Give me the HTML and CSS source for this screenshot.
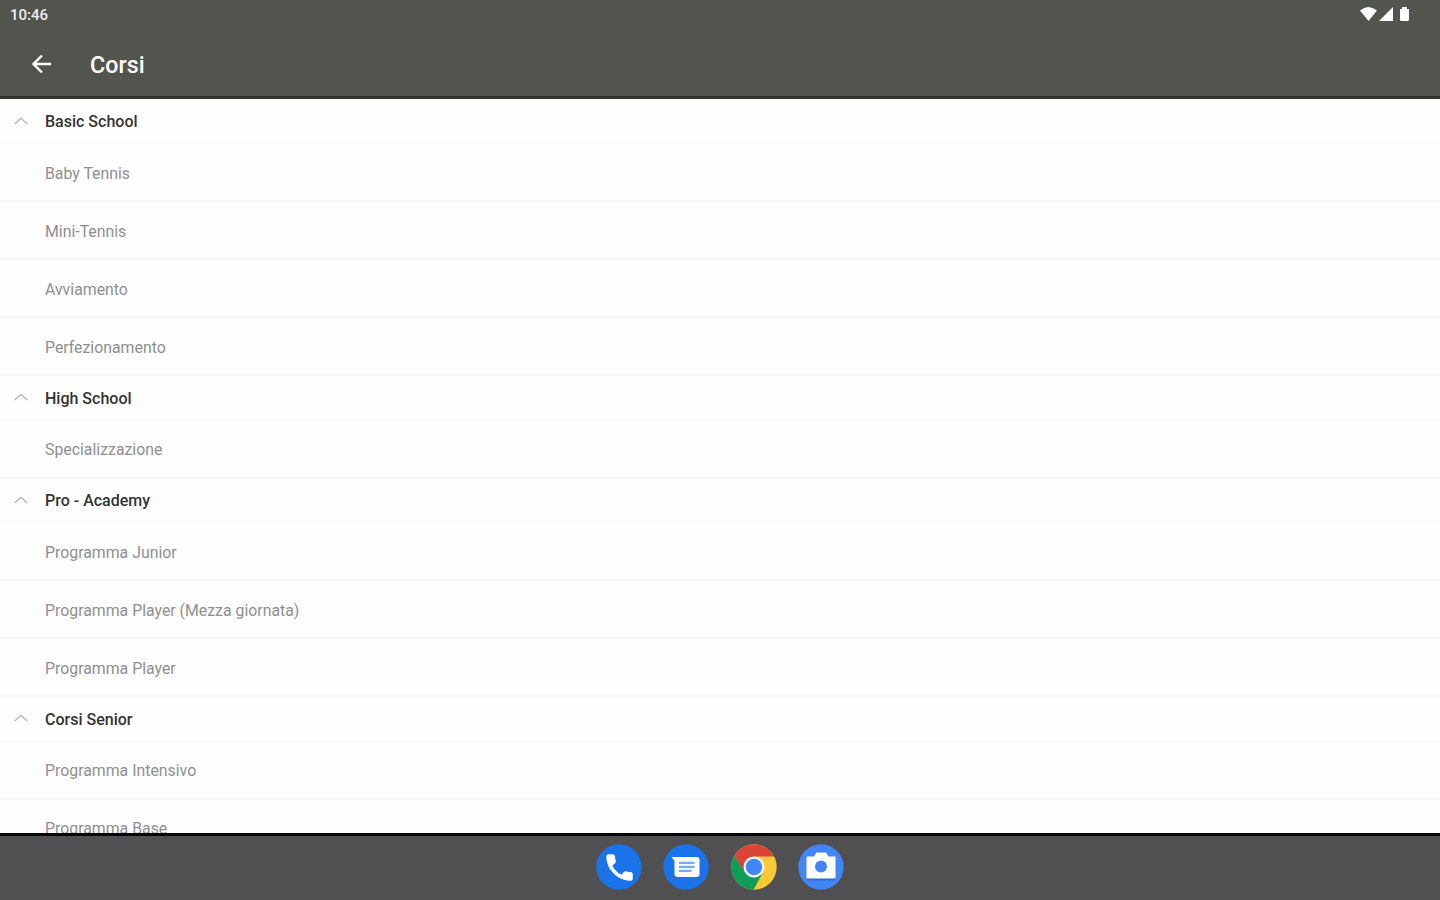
FILE: index.html
```html
<!DOCTYPE html>
<html lang="it">
<head>
    <meta charset="UTF-8">
    <title>Corsi</title>
    <link rel="stylesheet" href="styles.css">
</head>
<body>
    <header class="header">
        <div class="status-bar">
            <span class="clock">10:46</span>
            <svg class="status-icons" width="52" height="16" viewBox="0 0 52 16">
                <path d="M0 4.5Q8-2.5 17 4.5L8.500 15z"/>
                <path d="M33 1V15H19z"/>
                <path d="M40 3h2V1h5v2h2v10.500q0 1.500-1.500 1.500h-6q-1.500 0-1.500-1.500z"/>
            </svg>
        </div>
        <div class="toolbar">
            <svg class="back" width="20" height="20" viewBox="0 0 20 20">
                <path d="M19 10H2M10 1.500L1.500 10l8.500 8.500"/>
            </svg>
            <h1>Corsi</h1>
        </div>
    </header>

    <main class="list">
        <h2><svg class="chevron" viewBox="0 0 14 8"><path d="M.7 7L7 1.200 13.300 7"/></svg>Basic School</h2>
        <ul>
            <li><span>Baby Tennis</span></li>
            <li><span>Mini-Tennis</span></li>
            <li><span>Avviamento</span></li>
            <li><span>Perfezionamento</span></li>
        </ul>
        <h2><svg class="chevron" viewBox="0 0 14 8"><path d="M.7 7L7 1.200 13.300 7"/></svg>High School</h2>
        <ul>
            <li><span>Specializzazione</span></li>
        </ul>
        <h2><svg class="chevron" viewBox="0 0 14 8"><path d="M.7 7L7 1.200 13.300 7"/></svg>Pro - Academy</h2>
        <ul>
            <li><span>Programma Junior</span></li>
            <li><span>Programma Player (Mezza giornata)</span></li>
            <li><span>Programma Player</span></li>
        </ul>
        <h2><svg class="chevron" viewBox="0 0 14 8"><path d="M.7 7L7 1.200 13.300 7"/></svg>Corsi Senior</h2>
        <ul>
            <li><span>Programma Intensivo</span></li>
            <li><span>Programma Base</span></li>
        </ul>
    </main>

    <nav class="dock">
        <!-- telefono -->
        <svg viewBox="0 0 46 46">
            <circle cx="23" cy="23" r="22.700" fill="#1a73e8"/>
            <path transform="translate(6.500 6.500) scale(1.420)" fill="#fff" stroke="#fff" stroke-width=".6" d="M6.620 10.790c1.440 2.830 3.760 5.140 6.590 6.590l2.200-2.200c.27-.27.67-.36 1.020-.24 1.120.37 2.330.57 3.570.57.550 0 1 .45 1 1V20c0 .55-.45 1-1 1-9.390 0-17-7.610-17-17 0-.55.450-1 1-1h3.500c.55 0 1 .45 1 1 0 1.250.2 2.450.57 3.570.11.350.03.740-.25 1.020l-2.200 2.200z"/>
        </svg>
        <!-- messaggi -->
        <svg viewBox="0 0 46 46">
            <circle cx="23" cy="23" r="22.700" fill="#1a73e8"/>
            <path fill="#fff" d="M8.500 13H33.500q3 0 3 3v14q0 3-3 3h-19q-3 0-3-3V17z"/>
            <path stroke="#78aaf2" stroke-width="2.200" d="M16 18.800h15.500M16 22.800h15.500M16 26.800h12.500"/>
        </svg>
        <!-- chrome -->
        <svg viewBox="0 0 46 46">
            <circle cx="23" cy="23" r="22.700" fill="#fbc938"/>
            <path fill="#db4437" d="M3.340 11.650L14 29 23 12.500H42.900A22.700 22.700 0 0 0 3.340 11.650z"/>
            <path fill="#109d58" d="M3.340 11.650A22.700 22.700 0 0 0 22.500 45.700L32.100 28.300 23 33.500 13.900 28.300z"/>
            <circle cx="23" cy="23" r="10.500" fill="#f1f3f4"/>
            <circle cx="23" cy="23" r="8.200" fill="#4285f4"/>
        </svg>
        <!-- fotocamera -->
        <svg viewBox="0 0 46 46">
            <circle cx="23" cy="23" r="22.700" fill="#4285f4"/>
            <path fill="#2f6bd0" d="M9 34h28.500v2.500H9z"/>
            <path fill="#fff" d="M9.500 12.500H16l2.500-4h9.500l2.500 4h6.500q.5 0 .5.500v20.500q0 1-1 1h-27q-1 0-1-1V13.500q0-1 1-1z"/>
            <circle cx="23" cy="22.500" r="6" fill="#4285f4"/>
        </svg>
    </nav>
</body>
</html>
```
FILE: styles.css
```css
* {
    box-sizing: border-box;
}
body {
    margin: 0;
    height: 900px;
    overflow: hidden;
    display: flex;
    flex-direction: column;
    font-family: Roboto, sans-serif;
    background-color: #fefefe;
}
.header {
    height: 99px;
    flex: none;
    background-color: #52554e;
    border-bottom: 3px solid #30332d;
    color: #fff;
}
.status-bar {
    height: 30px;
    padding: 0 28px 0 10px;
    display: flex;
    align-items: center;
    justify-content: space-between;
}
.clock {
    font-size: 15px;
    font-weight: 500;
    color: #eee;
}
.status-icons {
    fill: #fff;
    margin-bottom: 2px;
}
.toolbar {
    height: 68px;
    padding-left: 32px;
    display: flex;
    align-items: center;
}
.back {
    fill: none;
    stroke: #fff;
    stroke-width: 2.4;
}
h1 {
    margin: 2px 0 0 38px;
    font-size: 23.3px;
    font-weight: 500;
}
.list {
    flex: 1;
    min-height: 0;
    overflow: hidden;
    padding-top: .6px;
}
h2 {
    height: 44.5px;
    margin: 0;
    padding: 2px 0 0 14px;
    display: flex;
    align-items: center;
    font-size: 16px;
    font-weight: 500;
    color: #333;
    border-bottom: 2px solid #fafafa;
}
.chevron {
    width: 14px;
    height: 8px;
    margin: 0 17px 2px 0;
    fill: none;
    stroke: #b0b0b0;
    stroke-width: 1.2;
}
ul {
    list-style: none;
    margin: 0;
    padding: 0;
}
li {
    height: 58px;
    padding: 2px 0 0 45px;
    display: flex;
    align-items: center;
    font-size: 15.85px;
    color: #8f8f8f;
    border-bottom: 2px solid #f7f7f7;
}
.dock {
    height: 67px;
    flex: none;
    display: flex;
    justify-content: center;
    gap: 21.5px;
    padding-top: 7.5px;
    background-color: #505052;
    border-top: 3px solid #050505;
}
.dock svg {
    width: 46px;
    height: 46px;
}
```
